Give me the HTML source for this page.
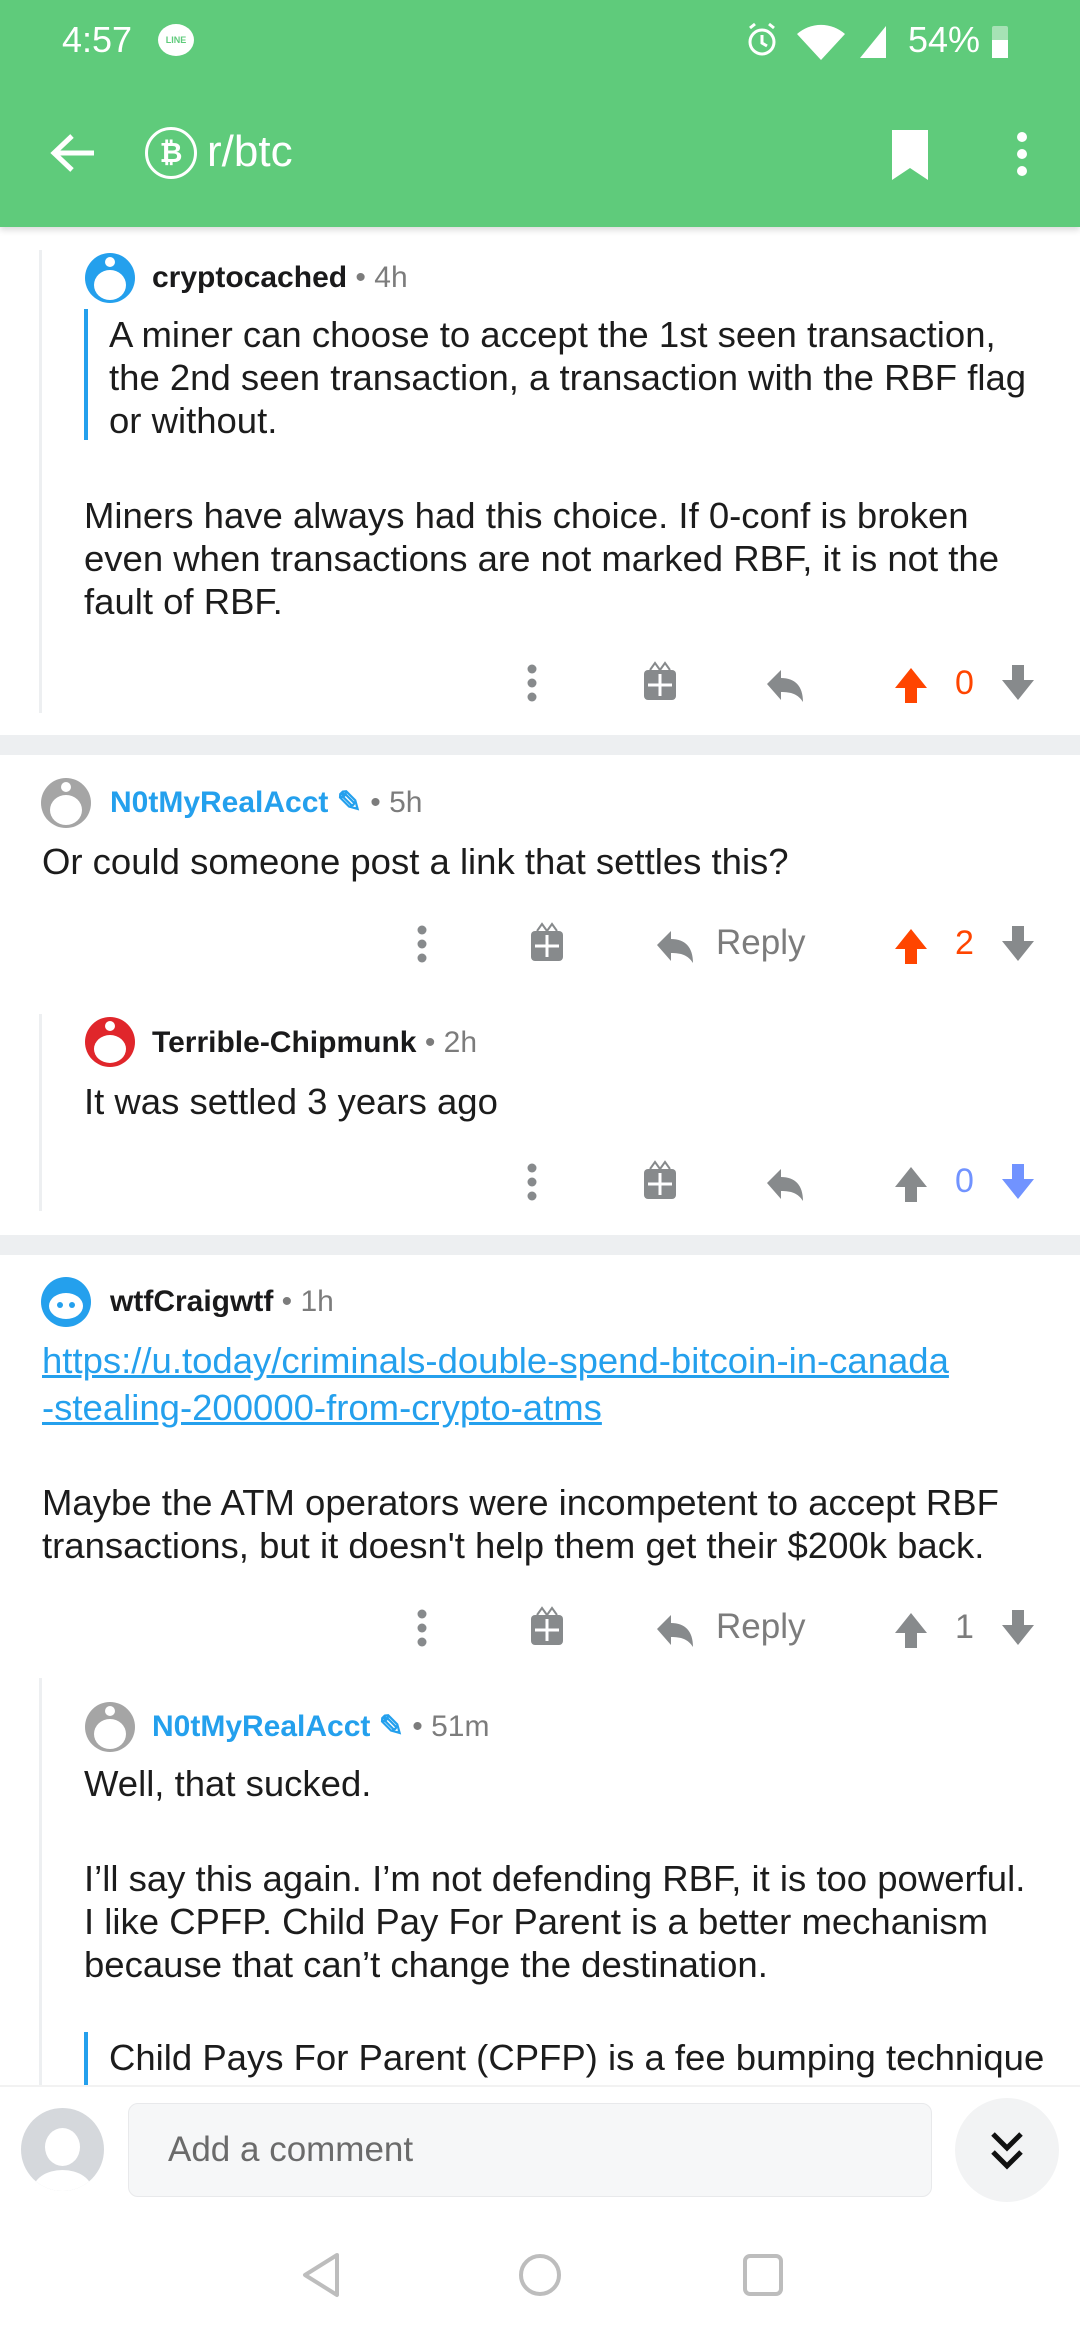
<!DOCTYPE html>
<html><head><meta charset="utf-8"><style>
*{margin:0;padding:0;box-sizing:border-box}
body{width:1080px;height:2340px;position:relative;overflow:hidden;background:#fff;font-family:"Liberation Sans",sans-serif;color:#1a1a1b}
.a{position:absolute}
.t{position:absolute;font-size:36.5px;line-height:43px;white-space:nowrap;color:#1c1c1c}
.u{position:absolute;font-size:30px;font-weight:bold;white-space:nowrap;line-height:32px}
.tm{font-weight:normal;color:#7c7c7c}
.sep{position:absolute;left:0;width:1080px;height:20px;background:#edeff1}
.vl{position:absolute;width:3px;background:#edeff1}
.q{position:absolute;width:4px;background:#24a0ed}
.cnt{position:absolute;font-size:34px;line-height:40px}
.rp{position:absolute;font-size:35px;color:#7c7c7c;line-height:40px}
</style></head><body>
<!-- header -->
<div class="a" style="left:0;top:0;width:1080px;height:227px;background:#5fcb7b;box-shadow:0 3px 6px rgba(0,0,0,.15)"></div>
<div class="a" style="left:62px;top:18px;font-size:36px;color:#fff;line-height:44px">4:57</div>
<div class="a" style="left:158px;top:24px;width:36px;height:32px;border-radius:50%;background:#fff;font-size:9px;font-weight:bold;color:#5fcb7b;text-align:center;line-height:32px">LINE</div>
<svg class="a" style="left:740px;top:20px" width="280" height="42" viewBox="0 0 280 42">
<circle cx="22" cy="22" r="12" fill="none" stroke="#fff" stroke-width="3"/><path d="M22 15v8l5 3" stroke="#fff" stroke-width="3" fill="none"/><path d="M10 8l5-4M34 8l-5-4" stroke="#fff" stroke-width="3"/>
<path d="M57 14a36 36 0 0 1 48 0L81 40z" fill="#fff"/>
<path d="M120 38L146 6V38z" fill="#fff"/>
</svg>
<div class="a" style="left:908px;top:18px;font-size:36px;color:#fff;line-height:44px">54%</div>
<div class="a" style="left:992px;top:26px;width:16px;height:32px;background:#a6e2b5;border-radius:2px"></div>
<div class="a" style="left:992px;top:40px;width:16px;height:18px;background:#fff"></div>
<svg class="a" style="left:48px;top:128px" width="52" height="50" viewBox="0 0 52 50"><path d="M46 25H8M24 8L6 25l18 17" stroke="#fff" stroke-width="5" fill="none"/></svg>
<div class="a" style="left:145px;top:127px;width:52px;height:52px;border:3.5px solid #fff;border-radius:50%;color:#fff;font-size:28px;font-weight:bold;text-align:center;line-height:45px">₿</div>
<div class="a" style="left:207px;top:126px;font-size:44px;color:#fff;line-height:52px">r/btc</div>
<svg class="a" style="left:884px;top:128px" width="50" height="54" viewBox="0 0 50 54"><path d="M4 2h40v50L26 40 8 52V2z" fill="#fff"/></svg>
<svg class="a" style="left:1010px;top:130px" width="24" height="50"><circle cx="12" cy="7" r="5" fill="#fff"/><circle cx="12" cy="24" r="5" fill="#fff"/><circle cx="12" cy="41" r="5" fill="#fff"/></svg>

<!-- comment 1 -->
<div class="vl" style="left:39px;top:250px;height:463px"></div>
<svg class="a" style="left:84px;top:252px" width="52" height="52"><circle cx="26" cy="26" r="25" fill="#24a0ed"/><ellipse cx="26" cy="33" rx="16" ry="15" fill="#fff"/><circle cx="26" cy="10" r="5" fill="#fff"/></svg>
<div class="u" style="left:152px;top:262px">cryptocached <span class="tm">• 4h</span></div>
<div class="q" style="left:84px;top:309px;height:131px"></div>
<div class="t" style="left:109px;top:313px">A miner can choose to accept the 1st seen transaction,</div>
<div class="t" style="left:109px;top:356px">the 2nd seen transaction, a transaction with the RBF flag</div>
<div class="t" style="left:109px;top:399px">or without.</div>
<div class="t" style="left:84px;top:494px">Miners have always had this choice. If 0-conf is broken</div>
<div class="t" style="left:84px;top:537px">even when transactions are not marked RBF, it is not the</div>
<div class="t" style="left:84px;top:580px">fault of RBF.</div>
<svg class="a" style="left:520px;top:660px" width="520" height="46" viewBox="0 0 520 46">
<g fill="#878a8c"><circle cx="12" cy="9" r="4.5"/><circle cx="12" cy="23" r="4.5"/><circle cx="12" cy="37" r="4.5"/>
<rect x="124" y="10" width="32" height="30" rx="4"/><path d="M130 10l5-7 5 7M150 10l-5-7-5 7" stroke="#878a8c" stroke-width="2" fill="none"/><path d="M140 14v22M128 25h24" stroke="#fff" stroke-width="3"/>
<path d="M247 24l14-14v8c14 0 22 8 22 24-5-8-12-10-22-10v8z"/>
<path d="M375 28l16-20 16 20h-10v15h-12V28z" fill="#ff4500"/>
<path d="M482 20h10V5h12v15h10l-16 20z"/></g>
</svg>
<div class="cnt" style="left:955px;top:663px;color:#ff4500">0</div>

<div class="sep" style="top:735px"></div>
<!-- comment 2 -->
<svg class="a" style="left:40px;top:777px" width="52" height="52"><circle cx="26" cy="26" r="25" fill="#a5a5a5"/><ellipse cx="26" cy="33" rx="16" ry="15" fill="#fff"/><circle cx="26" cy="10" r="5" fill="#fff"/></svg>
<div class="u" style="left:110px;top:787px;color:#24a0ed">N0tMyRealAcct <span style="color:#24a0ed">✎</span> <span class="tm">• 5h</span></div>
<div class="t" style="left:42px;top:840px">Or could someone post a link that settles this?</div>
<svg class="a" style="left:410px;top:921px" width="630" height="46" viewBox="0 0 630 46">
<g fill="#878a8c"><circle cx="12" cy="9" r="4.5"/><circle cx="12" cy="23" r="4.5"/><circle cx="12" cy="37" r="4.5"/>
<rect x="121" y="10" width="32" height="30" rx="4"/><path d="M127 10l5-7 5 7M147 10l-5-7-5 7" stroke="#878a8c" stroke-width="2" fill="none"/><path d="M137 14v22M125 25h24" stroke="#fff" stroke-width="3"/>
<path d="M247 24l14-14v8c14 0 22 8 22 24-5-8-12-10-22-10v8z"/>
<path d="M485 28l16-20 16 20h-10v15h-12V28z" fill="#ff4500"/>
<path d="M592 20h10V5h12v15h10l-16 20z"/></g>
</svg>
<div class="rp" style="left:716px;top:923px">Reply</div>
<div class="cnt" style="left:955px;top:923px;color:#ff4500">2</div>
<!-- child -->
<div class="vl" style="left:39px;top:1014px;height:197px"></div>
<svg class="a" style="left:84px;top:1016px" width="52" height="52"><circle cx="26" cy="26" r="25" fill="#e0262b"/><ellipse cx="26" cy="33" rx="16" ry="14" fill="#fff"/><circle cx="26" cy="10" r="5" fill="#fff"/></svg>
<div class="u" style="left:152px;top:1027px">Terrible-Chipmunk <span class="tm">• 2h</span></div>
<div class="t" style="left:84px;top:1080px">It was settled 3 years ago</div>
<svg class="a" style="left:520px;top:1159px" width="520" height="46" viewBox="0 0 520 46">
<g fill="#878a8c"><circle cx="12" cy="9" r="4.5"/><circle cx="12" cy="23" r="4.5"/><circle cx="12" cy="37" r="4.5"/>
<rect x="124" y="10" width="32" height="30" rx="4"/><path d="M130 10l5-7 5 7M150 10l-5-7-5 7" stroke="#878a8c" stroke-width="2" fill="none"/><path d="M140 14v22M128 25h24" stroke="#fff" stroke-width="3"/>
<path d="M247 24l14-14v8c14 0 22 8 22 24-5-8-12-10-22-10v8z"/>
<path d="M375 28l16-20 16 20h-10v15h-12V28z"/>
<path d="M482 20h10V5h12v15h10l-16 20z" fill="#7193ff"/></g>
</svg>
<div class="cnt" style="left:955px;top:1161px;color:#7193ff">0</div>

<div class="sep" style="top:1235px"></div>
<!-- comment 3 -->
<svg class="a" style="left:40px;top:1276px" width="52" height="52"><circle cx="26" cy="26" r="25" fill="#24a0ed"/><ellipse cx="26" cy="30" rx="17" ry="13" fill="#fff"/><circle cx="20" cy="29" r="3" fill="#24a0ed"/><circle cx="32" cy="29" r="3" fill="#24a0ed"/></svg>
<div class="u" style="left:110px;top:1286px">wtfCraigwtf <span class="tm">• 1h</span></div>
<div class="t" style="left:42px;top:1339px;text-decoration:underline;color:#24a0ed">https://u.today/criminals-double-spend-bitcoin-in-canada</div>
<div class="t" style="left:42px;top:1386px;text-decoration:underline;color:#24a0ed">-stealing-200000-from-crypto-atms</div>
<div class="t" style="left:42px;top:1481px">Maybe the ATM operators were incompetent to accept RBF</div>
<div class="t" style="left:42px;top:1524px">transactions, but it doesn't help them get their $200k back.</div>
<svg class="a" style="left:410px;top:1605px" width="630" height="46" viewBox="0 0 630 46">
<g fill="#878a8c"><circle cx="12" cy="9" r="4.5"/><circle cx="12" cy="23" r="4.5"/><circle cx="12" cy="37" r="4.5"/>
<rect x="121" y="10" width="32" height="30" rx="4"/><path d="M127 10l5-7 5 7M147 10l-5-7-5 7" stroke="#878a8c" stroke-width="2" fill="none"/><path d="M137 14v22M125 25h24" stroke="#fff" stroke-width="3"/>
<path d="M247 24l14-14v8c14 0 22 8 22 24-5-8-12-10-22-10v8z"/>
<path d="M485 28l16-20 16 20h-10v15h-12V28z"/>
<path d="M592 20h10V5h12v15h10l-16 20z"/></g>
</svg>
<div class="rp" style="left:716px;top:1607px">Reply</div>
<div class="cnt" style="left:955px;top:1607px;color:#7c7c7c">1</div>
<!-- child -->
<div class="vl" style="left:39px;top:1678px;height:410px"></div>
<svg class="a" style="left:84px;top:1701px" width="52" height="52"><circle cx="26" cy="26" r="25" fill="#a5a5a5"/><ellipse cx="26" cy="33" rx="16" ry="15" fill="#fff"/><circle cx="26" cy="10" r="5" fill="#fff"/></svg>
<div class="u" style="left:152px;top:1711px;color:#24a0ed">N0tMyRealAcct <span>✎</span> <span class="tm">• 51m</span></div>
<div class="t" style="left:84px;top:1762px">Well, that sucked.</div>
<div class="t" style="left:84px;top:1857px">I’ll say this again. I’m not defending RBF, it is too powerful.</div>
<div class="t" style="left:84px;top:1900px">I like CPFP. Child Pay For Parent is a better mechanism</div>
<div class="t" style="left:84px;top:1943px">because that can’t change the destination.</div>
<div class="q" style="left:84px;top:2032px;height:60px"></div>
<div class="t" style="left:109px;top:2036px">Child Pays For Parent (CPFP) is a fee bumping technique</div>

<!-- bottom -->
<div class="a" style="left:0;top:2085px;width:1080px;height:255px;background:#fff;border-top:2px solid #f2f2f2"></div>
<div class="a" style="left:21px;top:2108px;width:83px;height:83px;border-radius:50%;background:#d5d8dc;overflow:hidden">
<div class="a" style="left:24px;top:20px;width:35px;height:38px;border-radius:50%;background:#fff"></div>
<div class="a" style="left:12px;top:62px;width:59px;height:40px;border-radius:50%;background:#fff"></div></div>
<div class="a" style="left:128px;top:2103px;width:804px;height:94px;border-radius:10px;background:#f6f7f8;border:1px solid #e8e9eb"></div>
<div class="a" style="left:168px;top:2128px;font-size:35px;color:#6b6b6b;line-height:44px">Add a comment</div>
<div class="a" style="left:955px;top:2098px;width:104px;height:104px;border-radius:50%;background:#f2f3f4"></div>
<svg class="a" style="left:987px;top:2130px" width="40" height="42" viewBox="0 0 40 42"><path d="M6 4l14 14 14-14M6 22l14 14 14-14" stroke="#111" stroke-width="5" fill="none"/></svg>
<svg class="a" style="left:290px;top:2250px" width="500" height="50" viewBox="0 0 500 50">
<path d="M47 5L15 25l32 20z" fill="none" stroke="#bdbdbd" stroke-width="4" stroke-linejoin="round"/>
<circle cx="250" cy="25" r="19" fill="none" stroke="#bdbdbd" stroke-width="4"/>
<rect x="455" y="6" width="36" height="38" rx="5" fill="none" stroke="#bdbdbd" stroke-width="4"/>
</svg>
</body></html>
